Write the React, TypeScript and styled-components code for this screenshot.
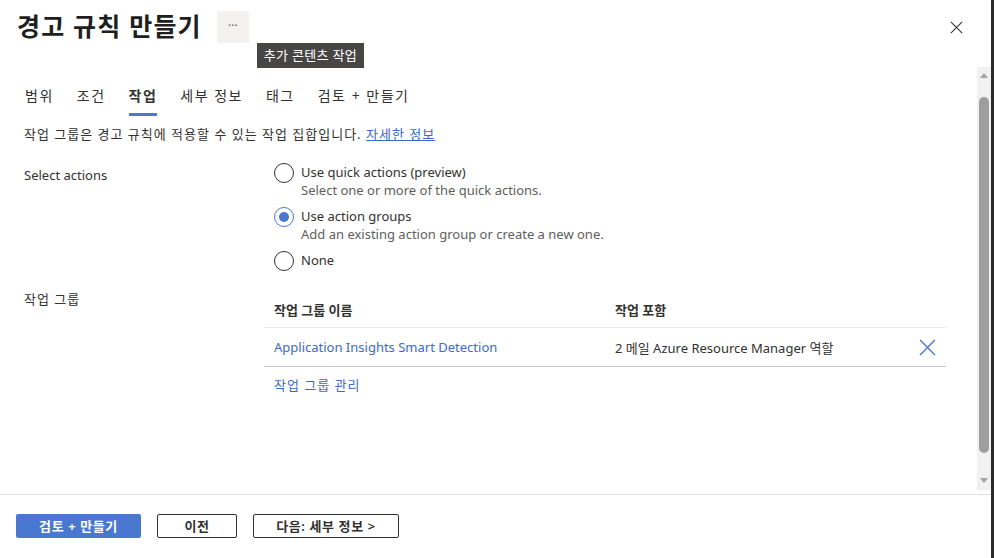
import React, { useState } from 'react'
import styled, { createGlobalStyle } from 'styled-components'

const GlobalStyle = createGlobalStyle`
    html, body {
        margin: 0;
        padding: 0;
        background: #ffffff;
    }
    body {
        font-family: "Segoe UI", "Noto Sans", "Noto Sans CJK KR", sans-serif;
        color: #323130;
        font-size: 13px;
    }
    * {
        box-sizing: border-box;
    }
`

const tabs = ['범위', '조건', '작업', '세부 정보', '태그', '검토 + 만들기']

const options = [
    { id: 'quick', label: 'Use quick actions (preview)', hint: 'Select one or more of the quick actions.' },
    { id: 'groups', label: 'Use action groups', hint: 'Add an existing action group or create a new one.' },
    { id: 'none', label: 'None', hint: '' },
]

const CloseIcon = ({ size, color }: { size: number; color: string }) => (
    <svg width={size} height={size} viewBox="0 0 16 16" fill="none">
        <path d="M1 1L15 15M15 1L1 15" stroke={color} strokeWidth="1.3" />
    </svg>
)

export default function App() {
    const [active, setActive] = useState('작업')
    const [choice, setChoice] = useState('groups')

    return (
        <Page>
            <GlobalStyle />
            <Header>
                <Title>경고 규칙 만들기</Title>
                <MoreWrap>
                    <MoreButton>···</MoreButton>
                    <Tooltip>추가 콘텐츠 작업</Tooltip>
                </MoreWrap>
                <CloseButton>
                    <CloseIcon size={13} color="#323130" />
                </CloseButton>
            </Header>

            <Body>
                <Content>
                    <Tabs>
                        {tabs.map(t => (
                            <Tab key={t} active={t === active} onClick={() => setActive(t)}>
                                {t}
                            </Tab>
                        ))}
                    </Tabs>

                    <Intro>
                        작업 그룹은 경고 규칙에 적용할 수 있는 작업 집합입니다. <Link href="#">자세한 정보</Link>
                    </Intro>

                    <FormRow>
                        <FieldLabel>Select actions</FieldLabel>
                        <RadioGroup>
                            {options.map(o => (
                                <RadioOption key={o.id} onClick={() => setChoice(o.id)}>
                                    <RadioCircle checked={choice === o.id} />
                                    <RadioText>
                                        <span>{o.label}</span>
                                        {o.hint && <Hint>{o.hint}</Hint>}
                                    </RadioText>
                                </RadioOption>
                            ))}
                        </RadioGroup>
                    </FormRow>

                    <FormRow>
                        <FieldLabel korean>작업 그룹</FieldLabel>
                        <Table>
                            <HeadRow>
                                <NameCell>작업 그룹 이름</NameCell>
                                <ActionCell>작업 포함</ActionCell>
                                <IconCell />
                            </HeadRow>
                            <DataRow>
                                <NameCell>
                                    <RowLink href="#">Application Insights Smart Detection</RowLink>
                                </NameCell>
                                <ActionCell>2 메일 Azure Resource Manager 역할</ActionCell>
                                <IconCell>
                                    <CloseIcon size={17} color="#4a78d0" />
                                </IconCell>
                            </DataRow>
                            <Manage href="#">작업 그룹 관리</Manage>
                        </Table>
                    </FormRow>
                </Content>

                <Scrollbar>
                    <Arrow up />
                    <Track>
                        <Thumb />
                    </Track>
                    <Arrow />
                </Scrollbar>
            </Body>

            <Footer>
                <PrimaryButton>검토 + 만들기</PrimaryButton>
                <SecondaryButton width={80}>이전</SecondaryButton>
                <SecondaryButton width={146}>다음: 세부 정보 &gt;</SecondaryButton>
            </Footer>
        </Page>
    )
}

const Page = styled.div`
    width: 994px;
    height: 558px;
    display: flex;
    flex-direction: column;
    border-right: 3px solid #2b2b2b;
    overflow: hidden;
`

const Header = styled.div`
    height: 67px;
    display: flex;
    align-items: flex-start;
    padding: 10px 0 0 17px;
`

const Title = styled.h1`
    margin: 0;
    font-size: 25px;
    font-weight: 700;
    line-height: 32px;
    color: #201f1e;
    letter-spacing: 1.2px;
`

const MoreWrap = styled.div`
    position: relative;
    margin-left: 15px;
    margin-top: 1px;
`

const MoreButton = styled.button`
    width: 32px;
    height: 32px;
    border: none;
    background: #f3f2f1;
    color: #605e5c;
    font-size: 12px;
    letter-spacing: 0;
    padding: 0 0 4px;
    font-family: inherit;
`

const Tooltip = styled.div`
    position: absolute;
    left: 40px;
    top: 32px;
    white-space: nowrap;
    background: #484644;
    color: #ffffff;
    font-size: 13px;
    line-height: 25px;
    padding: 0 7px;
    letter-spacing: 0.3px;
`

const CloseButton = styled.button`
    margin-left: auto;
    margin-right: 28px;
    margin-top: 11px;
    border: none;
    background: transparent;
    padding: 0;
    display: flex;
`

const Body = styled.div`
    flex: 1;
    display: flex;
    min-height: 0;
`

const Content = styled.div`
    flex: 1;
    padding: 19px 31px 0 24px;
`

const Tabs = styled.div`
    display: flex;
    gap: 23px;
    padding-left: 1px;
`

const Tab = styled.div<{ active: boolean }>`
    font-size: 14px;
    line-height: 20px;
    padding-bottom: 7px;
    color: #323130;
    letter-spacing: 1.5px;
    font-weight: ${({ active }) => (active ? 700 : 400)};
    border-bottom: 3px solid ${({ active }) => (active ? '#4a78d0' : 'transparent')};
    cursor: pointer;
`

const Intro = styled.p`
    margin: 8px 0 0;
    line-height: 20px;
    letter-spacing: 1px;
`

const Link = styled.a`
    color: #3b6bc9;
    text-decoration: underline;
`

const FormRow = styled.div`
    display: grid;
    grid-template-columns: 240px 1fr;
    margin-top: 19px;

    & + & {
        margin-top: 14px;
    }
`

const FieldLabel = styled.div<{ korean?: boolean }>`
    line-height: 20px;
    padding-top: ${({ korean }) => (korean ? '4px' : '2px')};
    letter-spacing: ${({ korean }) => (korean ? '1px' : '0')};
`

const RadioGroup = styled.div`
    display: flex;
    flex-direction: column;
    gap: 8px;
    padding-left: 10px;
`

const RadioOption = styled.div`
    display: flex;
    gap: 7px;
    cursor: pointer;
`

const RadioCircle = styled.span<{ checked: boolean }>`
    width: 20px;
    height: 20px;
    border-radius: 50%;
    border: 1px solid ${({ checked }) => (checked ? '#4a78d0' : '#323130')};
    display: flex;
    align-items: center;
    justify-content: center;
    flex-shrink: 0;

    &::after {
        content: '';
        width: 10px;
        height: 10px;
        border-radius: 50%;
        background: ${({ checked }) => (checked ? '#4a78d0' : 'transparent')};
    }
`

const RadioText = styled.div`
    display: flex;
    flex-direction: column;
    line-height: 18px;
`

const Hint = styled.span`
    color: #605e5c;
`

const Table = styled.div`
    display: flex;
    flex-direction: column;
`

const HeadRow = styled.div`
    display: flex;
    align-items: center;
    height: 43px;
    border-bottom: 1px solid #edebe9;
    font-weight: 700;
    padding-top: 7px;
`

const DataRow = styled.div`
    display: flex;
    align-items: center;
    height: 39px;
    border-bottom: 1px solid #c8c6c4;
`

const NameCell = styled.div`
    width: 351px;
    padding-left: 10px;
`

const ActionCell = styled.div`
    flex: 1;
`

const IconCell = styled.div`
    width: 38px;
    display: flex;
    justify-content: center;
`

const RowLink = styled.a`
    color: #3b6bc9;
    text-decoration: none;
`

const Manage = styled.a`
    color: #3b6bc9;
    text-decoration: none;
    padding: 8px 0 0 10px;
    line-height: 20px;
    letter-spacing: 1px;
`

const Scrollbar = styled.div`
    width: 14px;
    background: #f1f1f1;
    display: flex;
    flex-direction: column;
    align-items: center;
    margin-bottom: 4px;
`

const Arrow = styled.div<{ up?: boolean }>`
    width: 0;
    height: 0;
    border-left: 4px solid transparent;
    border-right: 4px solid transparent;
    ${({ up }) =>
        up
            ? 'border-bottom: 5px solid #a3a3a3; margin: 6px 0 19px;'
            : 'border-top: 5px solid #a3a3a3; margin: 22px 0 7px;'}
`

const Track = styled.div`
    flex: 1;
    width: 100%;
    display: flex;
    justify-content: center;
`

const Thumb = styled.div`
    width: 10px;
    height: 356px;
    background: #9e9e9e;
    border-radius: 5px;
`

const Footer = styled.div`
    height: 64px;
    border-top: 1px solid #e1dfdd;
    display: flex;
    align-items: center;
    gap: 16px;
    padding: 0 0 2px 16px;
`

const PrimaryButton = styled.button`
    width: 125px;
    height: 24px;
    border: none;
    border-radius: 2px;
    background: #4a78d0;
    color: #ffffff;
    font-family: inherit;
    font-size: 13px;
    font-weight: 700;
    letter-spacing: 0.6px;
`

const SecondaryButton = styled.button<{ width: number }>`
    width: ${({ width }) => width}px;
    height: 24px;
    border: 1px solid #323130;
    border-radius: 2px;
    background: #ffffff;
    color: #323130;
    font-family: inherit;
    font-size: 13px;
    font-weight: 600;
    letter-spacing: 0.6px;
`
